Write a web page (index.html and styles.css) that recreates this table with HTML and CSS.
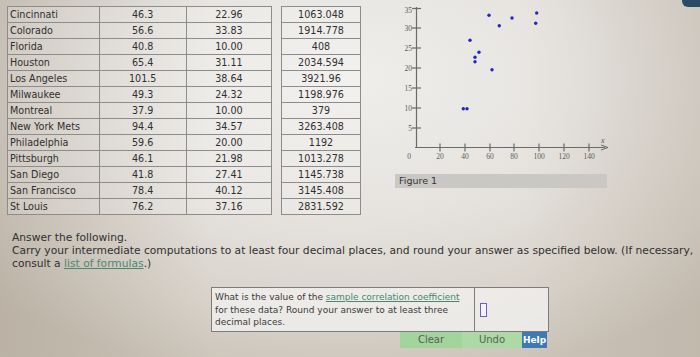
FILE: index.html
```html
<!DOCTYPE html>
<html>
<head>
<meta charset="utf-8">
<link rel="stylesheet" href="styles.css">
</head>
<body>
<div class="page">
  <div class="corner"></div>
  <div class="top">
    <table class="data main">
      <tr><td class="name">Cincinnati</td><td>46.3</td><td>22.96</td></tr>
      <tr><td class="name">Colorado</td><td>56.6</td><td>33.83</td></tr>
      <tr><td class="name">Florida</td><td>40.8</td><td>10.00</td></tr>
      <tr><td class="name">Houston</td><td>65.4</td><td>31.11</td></tr>
      <tr><td class="name">Los Angeles</td><td>101.5</td><td>38.64</td></tr>
      <tr><td class="name">Milwaukee</td><td>49.3</td><td>24.32</td></tr>
      <tr><td class="name">Montreal</td><td>37.9</td><td>10.00</td></tr>
      <tr><td class="name">New York Mets</td><td>94.4</td><td>34.57</td></tr>
      <tr><td class="name">Philadelphia</td><td>59.6</td><td>20.00</td></tr>
      <tr><td class="name">Pittsburgh</td><td>46.1</td><td>21.98</td></tr>
      <tr><td class="name">San Diego</td><td>41.8</td><td>27.41</td></tr>
      <tr><td class="name">San Francisco</td><td>78.4</td><td>40.12</td></tr>
      <tr><td class="name">St Louis</td><td>76.2</td><td>37.16</td></tr>
    </table>
    <table class="data prod">
      <tr><td>1063.048</td></tr>
      <tr><td>1914.778</td></tr>
      <tr><td>408</td></tr>
      <tr><td>2034.594</td></tr>
      <tr><td>3921.96</td></tr>
      <tr><td>1198.976</td></tr>
      <tr><td>379</td></tr>
      <tr><td>3263.408</td></tr>
      <tr><td>1192</td></tr>
      <tr><td>1013.278</td></tr>
      <tr><td>1145.738</td></tr>
      <tr><td>3145.408</td></tr>
      <tr><td>2831.592</td></tr>
    </table>
    <div class="figure">
      <svg class="plot" width="215" height="155" viewBox="0 0 215 155">
        <g stroke="#6a6a6a" stroke-width="1.2" fill="none">
          <line x1="21.5" y1="0" x2="21.5" y2="141"/>
          <line x1="20" y1="140.5" x2="210" y2="140.5"/>
          <line x1="17" y1="121" x2="26" y2="121"/>
          <line x1="17" y1="101" x2="26" y2="101"/>
          <line x1="17" y1="81" x2="26" y2="81"/>
          <line x1="17" y1="61" x2="26" y2="61"/>
          <line x1="17" y1="41" x2="26" y2="41"/>
          <line x1="17" y1="21" x2="26" y2="21"/>
          <line x1="17" y1="1.5" x2="26" y2="1.5"/>
          <line x1="45" y1="136.5" x2="45" y2="144.5"/>
          <line x1="70" y1="136.5" x2="70" y2="144.5"/>
          <line x1="95" y1="136.5" x2="95" y2="144.5"/>
          <line x1="119" y1="136.5" x2="119" y2="144.5"/>
          <line x1="144" y1="136.5" x2="144" y2="144.5"/>
          <line x1="169" y1="136.5" x2="169" y2="144.5"/>
          <line x1="194" y1="136.5" x2="194" y2="144.5"/>
        </g>
        <path d="M206 138 L213 140.5 L206 143" fill="none" stroke="#6a6a6a" stroke-width="1"/>
        <g class="ylab" text-anchor="end">
          <text x="17" y="124">5</text>
          <text x="17" y="104">10</text>
          <text x="17" y="84">15</text>
          <text x="17" y="64">20</text>
          <text x="17" y="44">25</text>
          <text x="17" y="24">30</text>
          <text x="17" y="6">35</text>
        </g>
        <g class="xlab" text-anchor="middle">
          <text x="14" y="152">0</text>
          <text x="45" y="152">20</text>
          <text x="70" y="152">40</text>
          <text x="95" y="152">60</text>
          <text x="119" y="152">80</text>
          <text x="144" y="152">100</text>
          <text x="169" y="152">120</text>
          <text x="194" y="152">140</text>
        </g>
        <text class="xvar" x="206" y="136">x</text>
        <g fill="#2424c4">
          <circle cx="94" cy="8.3" r="1.7"/>
          <circle cx="104.3" cy="18.7" r="1.7"/>
          <circle cx="117" cy="11" r="1.7"/>
          <circle cx="140.7" cy="16.3" r="1.7"/>
          <circle cx="141.7" cy="6" r="1.7"/>
          <circle cx="75" cy="33.3" r="1.7"/>
          <circle cx="84" cy="45.3" r="1.7"/>
          <circle cx="80" cy="50.3" r="1.7"/>
          <circle cx="80" cy="54.7" r="1.7"/>
          <circle cx="97" cy="62.7" r="1.7"/>
          <circle cx="68.3" cy="101.7" r="1.7"/>
          <circle cx="72" cy="101.7" r="1.7"/>
        </g>
      </svg>
      <div class="caption">Figure 1</div>
    </div>
  </div>

  <div class="instructions">
    <div>Answer the following.</div>
    <div>Carry your intermediate computations to at least four decimal places, and round your answer as specified below. (If necessary,</div>
    <div>consult a <a class="link">list of formulas</a>.)</div>
  </div>

  <div class="question">
    <div class="qbox">
      <div class="qtext">
        <div>What is the value of the <a class="link">sample correlation coefficient</a></div>
        <div>for these data? Round your answer to at least three</div>
        <div>decimal places.</div>
      </div>
      <div class="qanswer"><span class="input"></span></div>
    </div>
    <div class="buttons">
      <span class="btn clear">Clear</span>
      <span class="btn undo">Undo</span>
      <span class="btn help">Help</span>
    </div>
  </div>
</div>
</body>
</html>
```
FILE: styles.css
```css
html, body {
  margin: 0;
  padding: 0;
}
body {
  width: 700px;
  height: 357px;
  overflow: hidden;
  font-family: "DejaVu Sans", Verdana, sans-serif;
  color: #383838;
  background:
    linear-gradient(90deg, rgba(150,138,122,0.30) 0%, rgba(150,138,122,0.0) 30%, rgba(150,138,122,0) 75%, rgba(150,138,122,0.18) 100%),
    radial-gradient(ellipse 75% 85% at 50% 22%, #efeeeb 0%, #e6e3df 45%, #d7d1c8 80%, #cbc3b8 100%);
}
.page {
  position: relative;
  width: 700px;
  height: 357px;
}
.corner {
  position: absolute;
  right: 0;
  top: 0;
  width: 18px;
  height: 7px;
  background: #2b4a68;
  border-bottom-left-radius: 6px;
}
.top {
  display: flex;
  align-items: flex-start;
  padding: 6px 0 0 7px;
}
.data {
  border-collapse: collapse;
  font-size: 9.6px;
  color: #2f2f2f;
  background: rgba(255,255,255,0.18);
}
.data td {
  border: 1px solid #8c8c8c;
  height: 15px;
  padding: 0;
  text-align: center;
  line-height: 15px;
}
.main {
  width: 265px;
}
.main td:nth-child(1) { width: 89px; }
.main td:nth-child(2) { width: 87px; }
.main td:nth-child(3) { width: 85px; }
.data td.name {
  text-align: left;
  padding-left: 2px;
}
.prod {
  width: 80px;
  margin-left: 9px;
}
.figure {
  margin-left: 34px;
  padding-top: 1px;
  display: flex;
  flex-direction: column;
}
.plot {
  display: block;
}
.ylab text, .xlab text {
  font-family: "Liberation Serif", serif;
  font-size: 7.5px;
  fill: #5a5a5a;
}
.xvar {
  font-family: "Liberation Serif", serif;
  font-style: italic;
  font-size: 8px;
  fill: #5a5a5a;
}
.caption {
  margin-top: 12px;
  width: 208px;
  height: 14px;
  line-height: 14px;
  background: #c9c8c5;
  font-size: 9.5px;
  color: #333;
  padding-left: 4px;
}
.instructions {
  margin-top: 16px;
  padding-left: 12px;
  font-size: 10.7px;
  line-height: 13px;
  color: #303030;
}
.link {
  color: #4c8672;
  text-decoration: underline;
}
.question {
  margin: 17px 0 0 211px;
  width: 338px;
  display: flex;
  flex-direction: column;
}
.qbox {
  display: flex;
  border: 1px solid #7c7c7c;
  background: rgba(240,239,236,0.85);
  height: 43px;
}
.qtext {
  width: 259px;
  padding: 3px 0 0 3px;
  font-size: 9px;
  line-height: 12.5px;
  color: #3a3a3a;
  white-space: nowrap;
  border-right: 1px solid #7c7c7c;
}
.qanswer {
  flex: 1;
  display: flex;
  align-items: center;
  padding-left: 5px;
}
.input {
  display: block;
  width: 5px;
  height: 12px;
  border: 1px solid #6b5fc4;
  background: #f4f4f8;
}
.buttons {
  display: flex;
  justify-content: flex-end;
  padding-right: 2px;
}
.btn {
  height: 16px;
  line-height: 16px;
  text-align: center;
  font-size: 10px;
  color: #566155;
}
.clear {
  width: 62px;
  background: #a3d49c;
}
.undo {
  width: 60px;
  background: #add9a6;
}
.help {
  width: 25px;
  background: #3c79b6;
  color: #fff;
  font-weight: bold;
  font-size: 9px;
}
```
